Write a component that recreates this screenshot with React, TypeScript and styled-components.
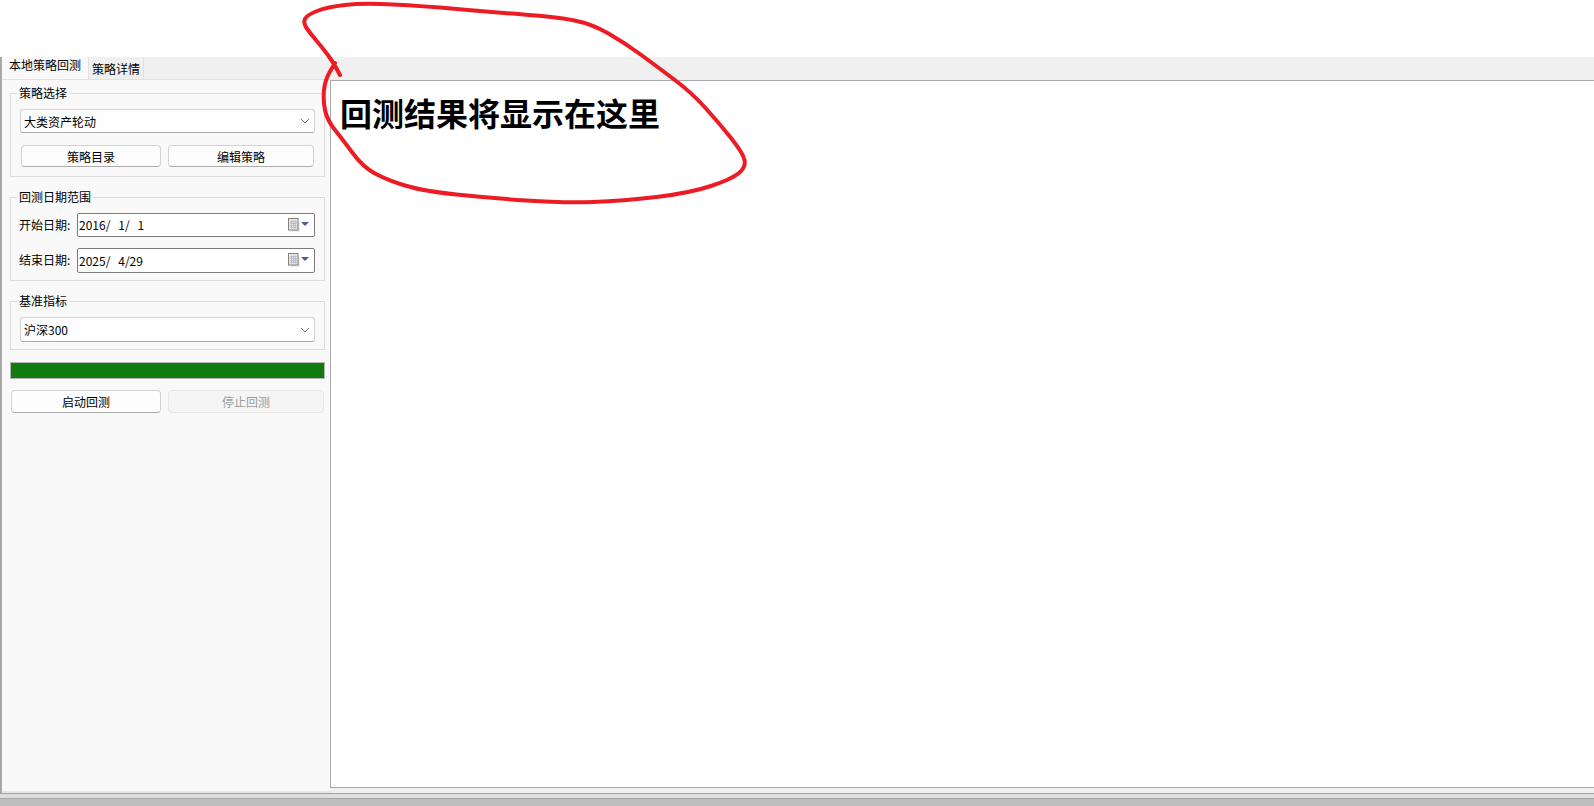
import styled, { createGlobalStyle } from "styled-components";

const GlobalStyle = createGlobalStyle`
  html,
  body {
    margin: 0;
    padding: 0;
    background: #fff;
  }

  * {
    box-sizing: border-box;
  }
`;

const Page = styled.div`
  position: relative;
  display: flex;
  flex-direction: column;
  width: 1594px;
  height: 806px;
  overflow: hidden;
  background: #fff;
  color: #000;
  font-family: "Noto Sans CJK SC", "Noto Sans", sans-serif;
  font-size: 12px;
`;

const TopGap = styled.div`
  flex: 0 0 57px;
`;

const Window = styled.div`
  flex: 1;
  display: flex;
  flex-direction: column;
  min-height: 0;
  background: #f0f0f0;
  border-left: 2px solid #a9a9a9;
`;

const TabBar = styled.div`
  flex: 0 0 22px;
  display: flex;
  align-items: flex-end;
`;

const Tab = styled.div<{ $active?: boolean }>`
  display: flex;
  align-items: center;
  justify-content: center;
  height: ${({ $active }) => ($active ? "22px" : "21px")};
  width: ${({ $active }) => ($active ? "87px" : "55px")};
  padding-bottom: ${({ $active }) => ($active ? "7px" : "0")};
  background: ${({ $active }) => ($active ? "#f9f9f9" : "#f0f0f0")};
  border-right: 1px solid #e0e0e0;
  white-space: nowrap;
`;

const Main = styled.div`
  flex: 1;
  display: flex;
  min-height: 0;
`;

const Sidebar = styled.aside`
  flex: 0 0 328px;
  display: flex;
  flex-direction: column;
  padding: 13px 5px 0 8px;
  background: #f9f9f9;
  border-top: 1px solid #e2e2e2;
  border-bottom: 2px solid #e6e6e6;
`;

const Group = styled.section<{ $bottom: number }>`
  display: flex;
  flex-direction: column;
  margin-bottom: 20px;
  padding: 0 9px ${({ $bottom }) => $bottom}px;
  border: 1px solid #dcdcdc;
  &:last-of-type {
    margin-bottom: 0;
  }
`;

const GroupTitle = styled.div`
  align-self: flex-start;
  margin: -9px 0 8px -3px;
  padding: 0 2px 1px;
  height: 16px;
  line-height: 15px;
  background: #f9f9f9;
`;

const Combo = styled.div<{ $height?: number }>`
  display: flex;
  align-items: center;
  justify-content: space-between;
  height: ${({ $height }) => $height ?? 24}px;
  padding: 0 4px 0 3px;
  background: #fefefe;
  border: 1px solid #d2d2d2;
  border-bottom-color: #ababab;
  border-radius: 3px;
`;

const ButtonRow = styled.div<{ $columns: string; $top: number }>`
  display: grid;
  grid-template-columns: ${({ $columns }) => $columns};
  gap: 7px;
  margin: ${({ $top }) => $top}px 0 0 1px;
`;

const Button = styled.div<{ $disabled?: boolean; $height: number }>`
  display: flex;
  align-items: center;
  justify-content: center;
  height: ${({ $height }) => $height}px;
  background: ${({ $disabled }) => ($disabled ? "#f5f5f5" : "#fdfdfd")};
  color: ${({ $disabled }) => ($disabled ? "#9b9b9b" : "#000")};
  border: 1px solid ${({ $disabled }) => ($disabled ? "#e6e6e6" : "#d2d2d2")};
  border-bottom-color: ${({ $disabled }) => ($disabled ? "#e6e6e6" : "#ababab")};
  border-radius: 4px;
`;

const DateRow = styled.div`
  display: flex;
  align-items: center;
  justify-content: space-between;
  margin-bottom: 11px;
  &:last-child {
    margin-bottom: 0;
  }
`;

const DateLabel = styled.span`
  margin-left: -1px;
  padding-bottom: 2px;
`;

const DateInput = styled.div<{ $height: number }>`
  display: flex;
  align-items: center;
  justify-content: space-between;
  width: 238px;
  height: ${({ $height }) => $height}px;
  padding: 0 4px 1px 1px;
  background: #fff;
  border: 1px solid #7a7a7a;
  border-radius: 2px;
  white-space: pre;
  word-spacing: 1.25px;
`;

const Progress = styled.div`
  height: 17px;
  margin-top: 12px;
  background: #107c10;
  border: 1px solid #b4b4b4;
`;

const ResultPanel = styled.main`
  flex: 1;
  margin: 1px 0 5px;
  padding: 8px 0 0 9px;
  background: #fff;
  border: 1px solid #a9a9a9;
  border-right: none;
`;

const ResultTitle = styled.h1`
  margin: 0;
  font-size: 32px;
  font-weight: 700;
  line-height: 46px;
`;

const Footer = styled.div`
  flex: 0 0 13px;
  display: flex;
  flex-direction: column;
  border-top: 1px solid #a3a3a3;
  background: #bdbdbd;
`;

const FooterEdge = styled.div`
  height: 5px;
  background: #dedede;
  border-bottom: 1px solid #a8a8a8;
`;

const Scribble = styled.svg`
  position: absolute;
  top: 0;
  left: 0;
  pointer-events: none;
`;

const scribblePoints = [
  [340, 75], [334, 63], [321, 46], [310, 33], [303, 23], [307, 15], [327, 7], [363, 3],
  [423, 6], [490, 12], [557, 17], [592, 24], [625, 43], [659, 68], [692, 93], [719, 123],
  [743, 153], [746, 167], [732, 179], [690, 193], [623, 201], [563, 203], [490, 198],
  [423, 191], [387, 180], [363, 167], [343, 140], [327, 120], [323, 100], [325, 80], [335, 63],
];

// smooths the pen stroke through the midpoints of the traced points
function scribblePath(points: number[][]) {
  let d = `M${points[0][0]} ${points[0][1]}`;
  for (let i = 1; i < points.length - 1; i++) {
    const mx = (points[i][0] + points[i + 1][0]) / 2;
    const my = (points[i][1] + points[i + 1][1]) / 2;
    d += ` Q${points[i][0]} ${points[i][1]} ${mx} ${my}`;
  }
  const last = points[points.length - 1];
  return `${d} L${last[0]} ${last[1]}`;
}

function ChevronIcon() {
  return (
    <svg width="10" height="6" viewBox="0 0 10 6" fill="none">
      <path d="M1 1l4 4 4-4" stroke="#7a7a7a" strokeWidth="1" />
    </svg>
  );
}

function CalendarIcon() {
  return (
    <svg width="22" height="14" viewBox="0 0 22 14" fill="none">
      <rect x="2.5" y="3.5" width="9" height="10" fill="#9a9a9a" opacity="0.35" />
      <rect x="0.5" y="0.5" width="9.5" height="11.5" fill="#e4e6ee" stroke="#8a8078" />
      <path d="M2 3.5h7M2 5.5h7M2 7.5h7M2 9.5h7M3.5 2.5v8M5.5 2.5v8M7.5 2.5v8" stroke="#b4b8c8" strokeWidth="0.8" />
      <path d="M13 4h8l-4 4z" fill="#4a5f8c" />
    </svg>
  );
}

export default function App() {
  return (
    <Page>
      <GlobalStyle />
      <TopGap />
      <Window>
        <TabBar>
          <Tab $active>本地策略回测</Tab>
          <Tab>策略详情</Tab>
        </TabBar>
        <Main>
          <Sidebar>
            <Group $bottom={9}>
              <GroupTitle>策略选择</GroupTitle>
              <Combo>
                <span>大类资产轮动</span>
                <ChevronIcon />
              </Combo>
              <ButtonRow $columns="140px 146px" $top={12}>
                <Button $height={22}>策略目录</Button>
                <Button $height={22}>编辑策略</Button>
              </ButtonRow>
            </Group>
            <Group $bottom={7}>
              <GroupTitle>回测日期范围</GroupTitle>
              <DateRow>
                <DateLabel>开始日期:</DateLabel>
                <DateInput $height={24}>
                  <span>2016/  1/  1</span>
                  <CalendarIcon />
                </DateInput>
              </DateRow>
              <DateRow>
                <DateLabel>结束日期:</DateLabel>
                <DateInput $height={25}>
                  <span>2025/  4/29</span>
                  <CalendarIcon />
                </DateInput>
              </DateRow>
            </Group>
            <Group $bottom={7}>
              <GroupTitle>基准指标</GroupTitle>
              <Combo $height={25}>
                <span>沪深300</span>
                <ChevronIcon />
              </Combo>
            </Group>
            <Progress />
            <ButtonRow $columns="150px 156px" $top={11}>
              <Button $height={23}>启动回测</Button>
              <Button $height={23} $disabled>停止回测</Button>
            </ButtonRow>
          </Sidebar>
          <ResultPanel>
            <ResultTitle>回测结果将显示在这里</ResultTitle>
          </ResultPanel>
        </Main>
      </Window>
      <Footer>
        <FooterEdge />
      </Footer>
      <Scribble width="1594" height="806" viewBox="0 0 1594 806" fill="none">
        <path
          d={scribblePath(scribblePoints)}
          stroke="#ed1c24"
          strokeWidth="4"
          strokeLinecap="round"
          strokeLinejoin="round"
        />
      </Scribble>
    </Page>
  );
}
